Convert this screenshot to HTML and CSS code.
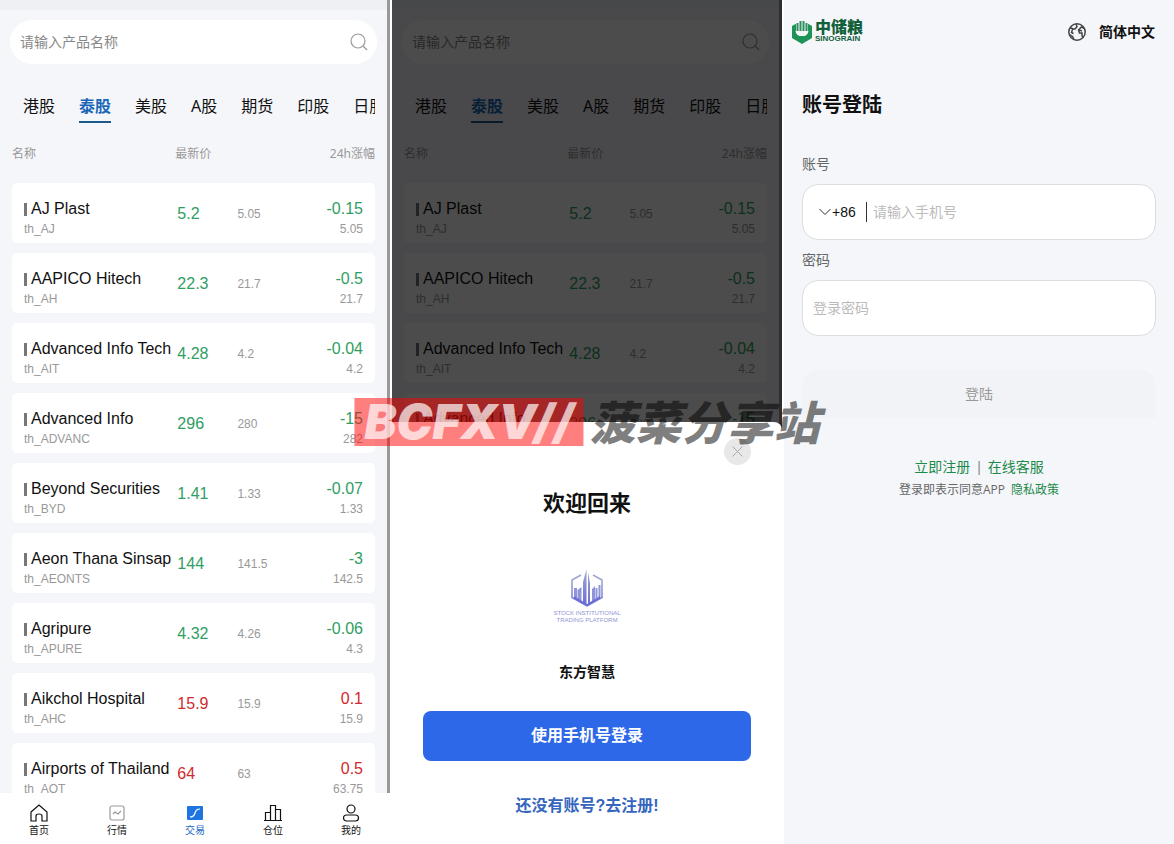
FILE: index.html
```html
<!DOCTYPE html>
<html lang="zh-CN">

<head>
    <meta charset="UTF-8">
    <meta name="viewport" content="width=device-width, initial-scale=1.0">
    <title>账号登陆</title>
    <link rel="stylesheet" href="styles.css">
</head>

<body>
    <main class="screens">
        <section class="screen" id="market"></section>

        <section class="screen" id="welcome">
            <div class="mask"></div>
            <div class="sheet">
                <button class="close" aria-label="关闭">
                    <svg width="11" height="11" viewBox="0 0 11 11" fill="none" stroke="#aaa"><path d="M0.5 0.5l10 10M10.5 0.5l-10 10" /></svg>
                </button>
                <h2>欢迎回来</h2>
                <svg class="brand" width="76" height="56" viewBox="0 0 76 56">
                    <defs>
                        <linearGradient id="fade" x1="0" y1="0" x2="0" y2="1">
                            <stop offset="0" stop-color="#a3a9cc" />
                            <stop offset="1" stop-color="#6a6fd6" />
                        </linearGradient>
                    </defs>
                    <path d="M32 7L23 12v17.500l15 8.500 15-8.500V12L44 7" fill="none" stroke="url(#fade)" stroke-width="1.500" />
                    <path d="M37.500 1l-3.500 13v21l3.500 2zM39 4v33l2-1V15z" fill="url(#fade)" />
                    <path d="M25 20h3v11l-3-1.500zM28.500 22l4-3v15l-4-2zM43 21l3-3v14l-3 2zM46.500 20h2v10l-2 1.500zM49.500 17h2v12l-2 1z" fill="#8f95d8" />
                    <path d="M25 28l13 8 13-8v2.500l-13 7.500-13-7.500z" fill="#6a6fd6" />
                    <text x="38" y="47" text-anchor="middle">STOCK INSTITUTIONAL</text>
                    <text x="38" y="54" text-anchor="middle">TRADING PLATFORM</text>
                </svg>
                <p class="brand-name">东方智慧</p>
                <button class="primary">使用手机号登录</button>
                <a class="signup" href="#">还没有账号?去注册!</a>
            </div>
        </section>

        <section class="screen login">
            <header>
                <div class="logo">
                    <svg width="22" height="24" viewBox="0 0 22 24">
                        <path d="M1 6l4-2.300V11q0 4 6 4t6-4V3.700L21 6v12l-10 6-10-6z" fill="#1d9457" />
                        <path d="M6.500 3v8M9.500 1v10M12.500 1v10M15.500 3v8" stroke="#2c8f5c" stroke-width="2" />
                        <path d="M5 11q1 4.500 6 4.500t6-4.500" fill="none" stroke="#fff" stroke-width="1.200" />
                    </svg>
                    <div>
                        <div class="logo-cn">中储粮</div>
                        <div class="logo-en">SINOGRAIN</div>
                    </div>
                </div>
                <button class="lang">
                    <svg width="20" height="20" viewBox="0 0 20 20" fill="none" stroke="#444" stroke-width="1.500">
                        <circle cx="10" cy="10" r="8.200" />
                        <path d="M3 5.500l3 1.500 2 0 2-2.500-1-2.500M5.500 7.500l-1 3 2 1M17.500 6.500l-3-1.500-3 3 1 3 2.500 0 0 3 1.500 1.500M12 8l3 1M2.500 12.500l3 2 1.500 3" />
                    </svg>
                    简体中文
                </button>
            </header>

            <form action="#">
                <h1>账号登陆</h1>
                <label for="phone">账号</label>
                <div class="field">
                    <svg width="12" height="8" viewBox="0 0 12 8" fill="none" stroke="#333"><path d="M0.500 1L6 6.500 11.500 1" /></svg>
                    <select aria-label="区号">
                        <option>+86</option>
                    </select>
                    <input type="text" id="phone" placeholder="请输入手机号">
                </div>
                <label for="pass">密码</label>
                <div class="field">
                    <input type="password" id="pass" placeholder="登录密码">
                </div>
                <button class="submit">登陆</button>
            </form>
            <div class="links">
                <a href="#">立即注册</a><span>|</span><a href="#">在线客服</a>
            </div>
            <div class="terms">登录即表示同意APP <a href="#">隐私政策</a></div>
        </section>
    </main>

    <div class="watermark">
        <span class="mark">BCFXV//</span>
        <span class="site">菠菜分享站</span>
    </div>

    <!-- shared by the first two screens -->
    <template id="market-tpl">
        <div class="list">
            <div class="search">
                <input type="text" aria-label="搜索产品" placeholder="请输入产品名称">
                <svg width="18" height="18" viewBox="0 0 18 18" fill="none" stroke="#999" stroke-width="1.200"><circle cx="8" cy="8" r="7" /><path d="M13 13l4 4" /></svg>
            </div>
            <nav class="tabs">
                <a href="#">港股</a>
                <a href="#" class="active">泰股</a>
                <a href="#">美股</a>
                <a href="#">A股</a>
                <a href="#">期货</a>
                <a href="#">印股</a>
                <a href="#">日股</a>
            </nav>
            <table>
                <thead>
                    <tr>
                        <th class="col-name">名称</th>
                        <th class="col-price">最新价</th>
                        <th class="col-price"></th>
                        <th class="right">24h涨幅</th>
                    </tr>
                </thead>
                <tbody></tbody>
            </table>
        </div>
        <nav class="tabbar">
            <a href="#">
                <svg viewBox="0 0 18 18"><path d="M1 8l8-7 8 7v9h-5v-5q0-2-3-2t-3 2v5H1z" /></svg>
                首页
            </a>
            <a href="#">
                <svg class="dim" viewBox="0 0 18 18"><rect x="2" y="2" width="14" height="14" rx="2" /><path d="M5 10l2-2 3 2 3-3" /></svg>
                行情
            </a>
            <a href="#" class="active">
                <svg viewBox="0 0 18 18"><rect x="1" y="2" width="16" height="14" rx="1" fill="#1e74e0" stroke="none" /><path d="M4 13q4 0 5-4t5-4" stroke="#fff" /></svg>
                交易
            </a>
            <a href="#">
                <svg viewBox="0 0 18 18"><path d="M0 16.500h18M1.500 16V8.500H6.500V16M6.500 16V1.500H11.500V16M11.500 5.500H16.500V16" /></svg>
                仓位
            </a>
            <a href="#">
                <svg viewBox="0 0 18 18"><circle cx="9" cy="5" r="4" /><rect x="1.500" y="11" width="15" height="6" rx="3" /></svg>
                我的
            </a>
        </nav>
    </template>

    <script>
        // name, code, price, open, change, last
        const stocks = [
            ["AJ Plast", "th_AJ", "5.2", "5.05", "-0.15", "5.05"],
            ["AAPICO Hitech", "th_AH", "22.3", "21.7", "-0.5", "21.7"],
            ["Advanced Info Tech", "th_AIT", "4.28", "4.2", "-0.04", "4.2"],
            ["Advanced Info", "th_ADVANC", "296", "280", "-15", "282"],
            ["Beyond Securities", "th_BYD", "1.41", "1.33", "-0.07", "1.33"],
            ["Aeon Thana Sinsap", "th_AEONTS", "144", "141.5", "-3", "142.5"],
            ["Agripure", "th_APURE", "4.32", "4.26", "-0.06", "4.3"],
            ["Aikchol Hospital", "th_AHC", "15.9", "15.9", "0.1", "15.9"],
            ["Airports of Thailand", "th_AOT", "64", "63", "0.5", "63.75"]
        ];

        function renderMarket(id) {
            let screen = document.getElementById(id);
            let tpl = document.getElementById("market-tpl").content.cloneNode(true);
            let rows = "";
            for (let s of stocks) {
                let trend = s[4].startsWith("-") ? "down" : "up";
                rows += `<tr>
                    <td><div class="name">${s[0]}</div><div class="sub">${s[1]}</div></td>
                    <td class="price ${trend}">${s[2]}</td>
                    <td class="open">${s[3]}</td>
                    <td class="right"><div class="${trend}">${s[4]}</div><div class="sub">${s[5]}</div></td>
                </tr>`;
            }
            tpl.querySelector("tbody").innerHTML = rows;
            screen.prepend(tpl);
        }

        renderMarket("market");
        renderMarket("welcome");
    </script>
</body>

</html>
```
FILE: styles.css
```css
* {
    box-sizing: border-box;
}

body {
    margin: 0;
    background: #fff;
    color: #111;
    font-family: "Liberation Sans", "Noto Sans CJK SC", sans-serif;
    font-size: 14px;
    line-height: 20px;
}

a {
    color: inherit;
    text-decoration: none;
}

button,
input,
select {
    padding: 0;
    border: none;
    background: none;
    color: inherit;
    font: inherit;
}

h1,
h2,
p {
    margin: 0;
}

.screens {
    display: grid;
    grid-template-columns: repeat(3, 1fr);
    gap: 2px;
    height: 100vh;
}

.screen {
    position: relative;
    display: flex;
    flex-direction: column;
    min-width: 0;
    overflow: hidden;
    background: #f5f6fa;
}

/* market list */
.list {
    flex: 1;
    min-height: 0;
    overflow: hidden;
    padding: 20px 12px 0;
    border-right: 3px solid #999;
    background: linear-gradient(#eff0f4 10px, #f5f6fa 10px);
}

.search {
    display: flex;
    align-items: center;
    height: 44px;
    margin: 0 -2px;
    padding: 0 9px 0 10px;
    border-radius: 22px;
    background: #fff;
}

.search input {
    flex: 1;
    min-width: 0;
}

.search input::placeholder {
    color: #888;
}

.tabs {
    display: flex;
    gap: 24px;
    margin-top: 30px;
    padding-left: 11px;
    overflow: hidden;
    font-family: "Noto Sans", "Noto Sans CJK SC", sans-serif;
    font-size: 16px;
    white-space: nowrap;
}

.tabs a {
    flex: none;
    padding: 2px 0 5px;
    border-bottom: 2px solid transparent;
}

.tabs .active {
    border-color: #1a5a8c;
    color: #1a66b8;
    font-weight: bold;
}

table {
    width: 100%;
    margin-top: 10px;
    border-spacing: 0 10px;
    table-layout: fixed;
}

th {
    height: 30px;
    padding: 0;
    color: #999;
    font-family: "Noto Sans", "Noto Sans CJK SC", sans-serif;
    font-size: 12px;
    font-weight: normal;
    line-height: 22px;
    text-align: left;
    vertical-align: top;
}

.col-name {
    width: 45%;
}

.col-price {
    width: 16%;
}

td {
    height: 60px;
    padding: 2px 0 0 2px;
    background: #fff;
    font-size: 16px;
    white-space: nowrap;
}

td:first-child {
    padding: 16px 0 4px 12px;
    border-radius: 5px 0 0 5px;
}

td:last-child {
    padding: 16px 12px 4px 0;
    border-radius: 0 5px 5px 0;
}

.right {
    text-align: right;
}

.name::before {
    content: "";
    display: inline-block;
    width: 3px;
    height: 13px;
    margin-right: 4px;
    background: #777;
    vertical-align: -2px;
}

.sub,
.open {
    color: #999;
    font-size: 12px;
}

td.open {
    padding-left: 4px;
}

.down {
    color: #2f9e62;
}

.up {
    color: #d02a2e;
}

.tabbar {
    display: flex;
    height: 51px;
    padding-top: 11px;
    background: #fff;
}

.tabbar a {
    display: flex;
    flex: 1;
    flex-direction: column;
    align-items: center;
    gap: 2px;
    font-size: 10px;
    line-height: 14px;
}

.tabbar svg {
    width: 18px;
    height: 18px;
    fill: none;
    stroke: #111;
    stroke-width: 1.2;
}

.tabbar .dim {
    stroke: #999;
}

.tabbar .active {
    color: #1e6cc0;
}

/* welcome sheet */
.mask {
    position: absolute;
    inset: 0;
    background: rgba(0, 0, 0, 0.7);
}

.sheet {
    position: absolute;
    inset: 50% 0 0;
    display: flex;
    flex-direction: column;
    align-items: center;
    padding: 67px 31px 0;
    border-radius: 0 8px 0 0;
    background: #fff;
}

.close {
    position: absolute;
    top: 16px;
    right: 31px;
    display: flex;
    align-items: center;
    justify-content: center;
    width: 27px;
    height: 27px;
    border-radius: 50%;
    background: #e8e8e8;
}

.sheet h2 {
    font-size: 22px;
    line-height: 30px;
}

.brand {
    flex: none;
    margin-top: 49px;
}

.brand text {
    fill: #8f95d2;
    font-size: 6px;
}

.brand-name {
    margin-top: 38px;
    font-weight: bold;
}

.primary {
    width: 100%;
    height: 50px;
    margin-top: 29px;
    border-radius: 8px;
    background: #2d68e8;
    color: #fff;
    font-size: 16px;
    font-weight: bold;
}

.signup {
    margin-top: 35px;
    color: #3565bd;
    font-size: 16px;
    font-weight: bold;
}

/* login */
.login header {
    display: flex;
    align-items: center;
    justify-content: space-between;
    height: 64px;
    padding: 0 19px 0 7px;
}

.logo {
    display: flex;
    align-items: center;
    gap: 2px;
    color: #12603a;
    font-weight: 900;
}

.logo-cn {
    font-size: 16px;
    line-height: 14px;
}

.logo-en {
    font-size: 8px;
    line-height: 8px;
}

.lang {
    display: flex;
    align-items: center;
    gap: 12px;
    font-weight: bold;
}

.login form {
    display: flex;
    flex-direction: column;
    padding: 26px 18px 0;
}

.login h1 {
    margin-bottom: 24px;
    font-size: 20px;
    line-height: 30px;
}

.login label {
    margin: 10px 0;
    color: #666;
}

.field {
    display: flex;
    align-items: center;
    height: 56px;
    padding: 0 10px;
    border: 1px solid #dcdde0;
    border-radius: 16px;
    background: #fff;
}

.field svg {
    margin-left: 6px;
}

.field select {
    width: 36px;
    margin-right: 6px;
    padding-left: 1px;
    border-right: 1px solid #333;
    appearance: none;
}

.field input {
    flex: 1;
    min-width: 0;
}

.field input::placeholder {
    color: #bbb;
}

.submit {
    height: 48px;
    margin-top: 34px;
    border-radius: 16px 16px 0 0;
    background: #f1f3f7;
    color: #999;
}

.links {
    display: flex;
    justify-content: center;
    gap: 7px;
    margin-top: 39px;
    color: #888;
}

.links a,
.terms a {
    color: #1c8a4a;
}

.terms {
    margin-top: 3px;
    color: #666;
    font-family: "Open Sans", "Noto Sans CJK SC", sans-serif;
    font-size: 12px;
    text-align: center;
}

.terms a {
    margin-left: 3px;
}

/* site mark across all screens */
.watermark {
    position: absolute;
    top: 50%;
    left: 50%;
    display: flex;
    align-items: center;
    gap: 6px;
    height: 48px;
    transform: translate(-50%, -50%);
    font-style: italic;
    font-weight: 900;
    line-height: 48px;
    white-space: nowrap;
    pointer-events: none;
}

.mark {
    padding: 0 10px;
    background: rgba(255, 0, 0, 0.5);
    color: rgba(255, 255, 255, 0.7);
    font-family: Inter, "Liberation Sans", sans-serif;
    font-size: 48px;
}

.site {
    padding-top: 4px;
    color: rgba(0, 0, 0, 0.5);
    font-size: 46px;
}
```
